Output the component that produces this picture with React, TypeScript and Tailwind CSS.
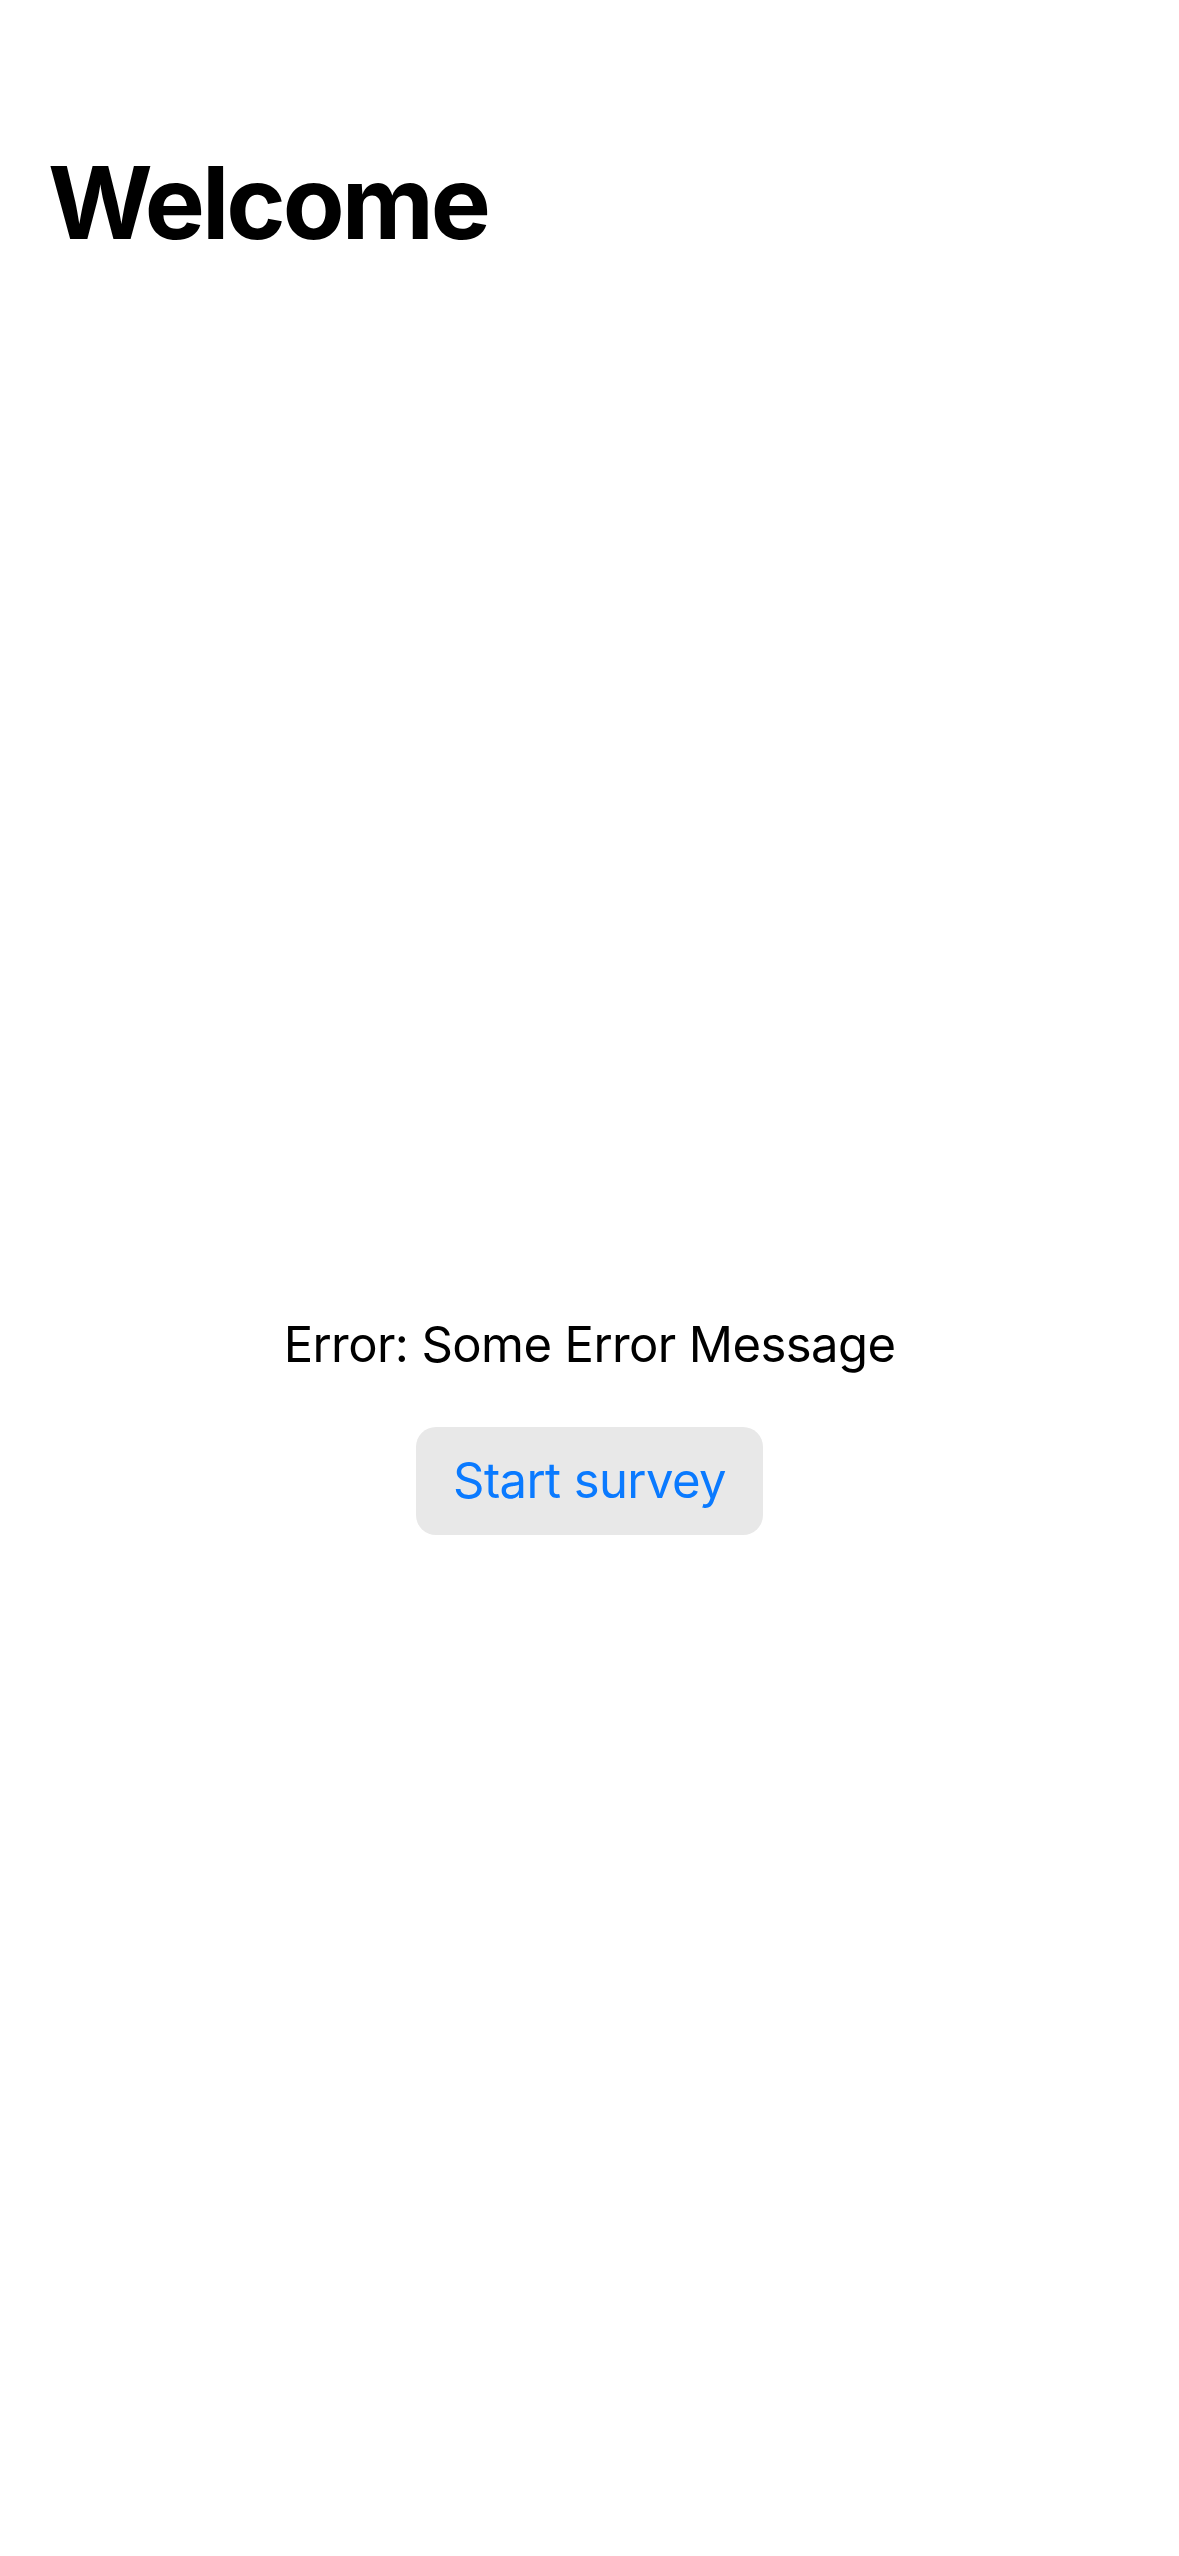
import React from 'react';

export default function App() {
  return (
    <div
      className="flex min-h-screen w-full flex-col bg-white text-black"
      style={{ fontFamily: 'Inter, "Noto Sans", sans-serif' }}
    >
      <h1 className="pl-[48px] pt-[152px] text-[101px] font-bold leading-none tracking-[-3px]">
        Welcome
      </h1>
      <div className="flex flex-1 flex-col items-center justify-center pt-[40px]">
        <p className="text-[49px] leading-[61px] tracking-[-0.6px]">Error: Some Error Message</p>
        <button className="mt-[52px] h-[108px] w-[347px] rounded-[20px] bg-[#e8e8e8] text-[49px] tracking-[-0.6px] text-[#0a7aff]">
          Start survey
        </button>
      </div>
    </div>
  );
}
